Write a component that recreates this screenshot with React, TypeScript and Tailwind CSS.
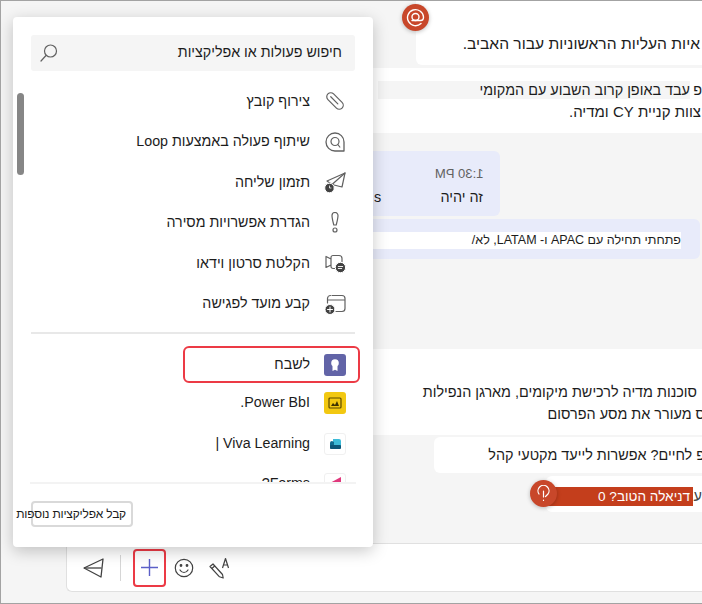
import type { ReactNode } from "react";

const font = "font-['Liberation_Sans',_'Noto_Sans',_sans-serif]";

function Svg({ children, size = 22 }: { children: ReactNode; size?: number }) {
  return (
    <svg width={size} height={size} viewBox="0 0 22 22" fill="none" stroke="#616161" strokeWidth="1.2" strokeLinecap="round" strokeLinejoin="round">
      {children}
    </svg>
  );
}

const ClipIcon = () => (
  <Svg>
    <g transform="rotate(-45 11 11)">
      <rect x="7" y="1" width="8" height="20" rx="4" />
      <path d="M11 5v10" />
    </g>
  </Svg>
);
const LoopIcon = () => (
  <Svg>
    <path d="M11 2a9 9 0 1 0 0 18h9v-9a9 9 0 0 0-9-9z" strokeWidth="1.300" />
    <circle cx="11" cy="10.500" r="4" />
    <path d="M13.800 13.500l2 2.500" />
  </Svg>
);
const ScheduleIcon = () => (
  <Svg>
    <path d="M21 2L3 10l5 3.500 10 2.500 3-14z" />
    <path d="M8 13.500L21 2" />
    <circle cx="5.500" cy="17" r="4.800" fill="#424242" stroke="white" strokeWidth="1" />
    <path d="M5.500 15v2H7" stroke="white" strokeWidth="0.800" />
  </Svg>
);
const AlertIcon = () => (
  <Svg>
    <path d="M8 3.500a3 3 0 0 1 6 0c0 3-1.300 7.500-1.800 9.500H9.800C9.300 11 8 6.500 8 3.500z" />
    <circle cx="11" cy="18" r="2" />
  </Svg>
);
const VideoIcon = () => (
  <Svg>
    <path d="M9 3.500h6a3 3 0 0 1 3 3v3M11 16.500H9a2 2 0 0 1-2-2v-9a2 2 0 0 1 2-2M7 7L2 4.500v11L7 13" />
    <circle cx="16.500" cy="15.500" r="5.200" fill="#424242" stroke="white" strokeWidth="1" />
    <path d="M14.300 14.500h4.400M14.300 16.500h3.400" stroke="white" strokeWidth="0.900" />
  </Svg>
);
const CalendarIcon = () => (
  <Svg>
    <path d="M8 2.500h10a3 3 0 0 1 3 3v10a3 3 0 0 1-3 3h-6M3.500 10V5.500a3 3 0 0 1 3-3M3.500 7h17.500" />
    <circle cx="6" cy="16.500" r="5" fill="#424242" stroke="white" strokeWidth="1" />
    <path d="M6 14v5M3.500 16.500h5" stroke="white" strokeWidth="1" />
  </Svg>
);

function Tile({ className, children }: { className: string; children: ReactNode }) {
  return <span className={`w-[22px] h-[22px] rounded-[3px] flex items-center justify-center shrink-0 ${className}`}>{children}</span>;
}

const PraiseTile = () => (
  <Tile className="bg-[#6264a7]">
    <svg width="12" height="14" viewBox="0 0 12 14">
      <circle cx="6" cy="5" r="3.800" fill="white" />
      <path d="M3.500 8v5l2.500-1.200L8.500 13V8z" fill="white" />
    </svg>
  </Tile>
);
const PowerTile = () => (
  <Tile className="bg-[#f2c811]">
    <svg width="14" height="12" viewBox="0 0 14 12">
      <rect x="1" y="1" width="12" height="10" rx="1" fill="none" stroke="#5c4a00" strokeWidth="1.200" />
      <path d="M3 9l2-3 2 2 2-4 2 5z" fill="#3d3200" />
    </svg>
  </Tile>
);
const VivaTile = () => (
  <Tile className="bg-white border border-[#f0f0f0]">
    <svg width="13" height="12" viewBox="0 0 13 12">
      <path d="M4 1h6a2 2 0 0 1 2 2v6H4z" fill="#3dbbd8" />
      <path d="M1 5a2 2 0 0 1 2-2l2 1v7H3a2 2 0 0 1-2-2z" fill="#0f6b8f" />
      <rect x="1" y="7" width="11" height="4" rx="1" fill="#0b5577" />
    </svg>
  </Tile>
);
const FormsTile = () => (
  <Tile className="bg-white border border-[#f0f0f0] items-start">
    <svg className="mt-[2px]" width="16" height="14" viewBox="0 0 16 14">
      <path d="M1 8L14 1v12H5z" fill="#e0387c" />
    </svg>
  </Tile>
);

const actions = [
  { label: "צירוף קובץ", icon: <ClipIcon /> },
  { label: "שיתוף פעולה באמצעות Loop", icon: <LoopIcon /> },
  { label: "תזמון שליחה", icon: <ScheduleIcon /> },
  { label: "הגדרת אפשרויות מסירה", icon: <AlertIcon /> },
  { label: "הקלטת סרטון וידאו", icon: <VideoIcon /> },
  { label: "קבע מועד לפגישה", icon: <CalendarIcon /> },
];

function Row({ icon, label, className = "h-[40.5px]" }: { icon: ReactNode; label: string; className?: string }) {
  return (
    <div className={`flex items-center gap-[14px] pr-[27px] text-[14.25px] text-[#1c1c1c] whitespace-nowrap ${className}`}>
      {icon}
      <span>{label}</span>
    </div>
  );
}

function Popup() {
  return (
    <div dir="rtl" className="absolute left-[12px] top-[16px] w-[360px] h-[530px] bg-white rounded-[4px] shadow-[0_4px_16px_rgba(0,0,0,0.22)] flex flex-col">
      <div className="absolute left-[4px] top-[76px] w-[7px] h-[82px] rounded-full bg-[#868686]" />
      <div className="mt-[18px] mx-[18px] h-[36px] shrink-0 bg-[#f5f5f5] rounded-[3px] flex items-center justify-between pr-[13px] pl-[8px] text-[14.25px] text-[#1c1c1c]">
        <span>חיפוש פעולות או אפליקציות</span>
        <svg width="20" height="20" viewBox="0 0 20 20" fill="none" stroke="#616161" strokeWidth="1.200" strokeLinecap="round">
          <circle cx="11.500" cy="8" r="6" />
          <path d="M7 12.500L2 18" />
        </svg>
      </div>

      <div className="h-[411px] shrink-0 overflow-hidden pt-[10px]">
        {actions.map((a) => (
          <Row key={a.label} icon={<span className="shrink-0 flex">{a.icon}</span>} label={a.label} />
        ))}
        <div className="h-[2px] mx-[18px] mt-[8px] bg-[#e8e8e8]" />
        <div className="relative mt-[12px] h-[37px] flex items-center">
          <Row icon={<PraiseTile />} label="לשבח" className="h-full w-full" />
          <div className="absolute left-[170px] right-[13px] inset-y-0 border-2 border-[#ec3a45] rounded-[6px]" />
        </div>
        <Row icon={<PowerTile />} label="Power BbI." className="h-[40px]" />
        <Row icon={<VivaTile />} label="Viva Learning |" className="h-[41px]" />
        <Row icon={<FormsTile />} label="Forms?" className="h-[40px]" />
      </div>
      <div className="h-[2px] mx-[17px] shrink-0 bg-[#f3f3f3]" />

      <div className="mt-[17px] mr-[240px] ml-[18px] h-[26px] border-2 border-[#d9d9d9] rounded-[4px] flex items-center pr-[5px] text-[12px] tracking-[-0.2px] text-[#1c1c1c] whitespace-nowrap">
        קבל אפליקציות נוספות
      </div>
    </div>
  );
}

function Composer() {
  return (
    <div className="ml-[65px] h-[49px] mb-[11px] shrink-0 bg-white border-t border-b border-l border-[#e0e0e0] rounded-bl-[6px] flex items-center pl-[16px]">
      <svg width="22" height="22" viewBox="0 0 22 22" fill="none" stroke="#424242" strokeWidth="1.300" strokeLinejoin="round">
        <path d="M1 11L20 2l-2 18z" />
        <path d="M1 11h17.500" />
      </svg>
      <div className="w-px h-[26px] bg-[#d6d6d6] ml-[15px] mr-[12px]" />
      <div className="w-[33px] h-[38px] border-2 border-[#ec3a45] rounded-[4px] flex items-center justify-center">
        <svg width="19" height="19" viewBox="0 0 19 19" stroke="#5b5fc7" strokeWidth="1.400">
          <path d="M9.500 1v17M1 9.500h17" />
        </svg>
      </div>
      <svg className="ml-[8px]" width="20" height="20" viewBox="0 0 20 20" fill="none" stroke="#424242" strokeWidth="1.200" strokeLinecap="round">
        <circle cx="10" cy="10" r="8.700" />
        <path d="M6 12c1 1.800 2.500 2.500 4 2.500s3-.7 4-2.500" />
        <circle cx="7" cy="7.500" r="0.800" fill="#424242" />
        <circle cx="13" cy="7.500" r="0.800" fill="#424242" />
      </svg>
      <svg className="ml-[15px]" width="22" height="22" viewBox="0 0 22 22" fill="none" stroke="#424242" strokeWidth="1.200" strokeLinejoin="round">
        <path d="M1 9.500l3-2.500 9.500 10.500.700 3.500-3.700-1.200z" />
        <path d="M2.800 11.500L6 8.800" />
        <path d="M13.500 11l3-9.500 3 9.500M14.500 8h4" />
      </svg>
    </div>
  );
}

export default function App() {
  return (
    <div className={`relative w-[702px] h-[604px] overflow-hidden bg-[#f5f5f5] border-t border-l border-b border-[#a3a3a3] flex flex-col ${font}`}>
      <div dir="rtl" className="flex-1 flex flex-col text-[14.4px] text-[#1c1c1c] whitespace-nowrap">
        <div className="relative ml-[415px] h-[64px] bg-white rounded-bl-[6px] pr-[2px] pt-[33px] leading-[20px] text-[15.6px]">
          איות העליות הראשוניות עבור האביב.
          <div className="absolute top-[3px] left-[-14px] w-[27px] h-[27px] rounded-full bg-[#c8472a] flex items-center justify-center shadow-[0_1px_4px_rgba(0,0,0,0.25)]">
            <svg width="19" height="19" viewBox="0 0 19 19" fill="none" stroke="white" strokeWidth="1.400" strokeLinecap="round">
              <path d="M15 15.500A8 8 0 1 1 17.500 9c0 2-1 3.500-2.800 3.500H6" />
              <circle cx="9.500" cy="9" r="3.500" />
            </svg>
          </div>
        </div>

        <div className="mt-[3px] ml-[372px] h-[65px] bg-white pt-[13px]">
          <div className="flex h-[18px] items-center leading-[18px]">
            <span className="w-[12px] shrink-0">פ</span>
            <span className="w-[312px] shrink-0 bg-[#f5f5f5]">עבד באופן קרוב השבוע עם המקומי</span>
          </div>
          <div className="mt-[3px] leading-[20px] pr-[1px] text-[15px]">צוות קניית CY ומדיה.</div>
        </div>

        <div className="mt-[18px] ml-[349px] mr-[202px] h-[65px] bg-[#e8ebfa] rounded-[6px] pt-[14px] pr-[17px] pl-[24px]">
          <div dir="ltr" className="text-right leading-[16px]">
            <span className="inline-block -scale-x-100 text-[13px] text-[#616161]">1:30 PM</span>
          </div>
          <div className="mt-[5px] flex justify-between leading-[20px]">
            <span>זה יהיה</span>
            <span>s</span>
          </div>
        </div>

        <div className="mt-[3px] ml-[349px] mr-[2px] h-[40px] bg-[#e8ebfa] rounded-[6px] pt-[13px] pr-[19px]">
          <div className="h-[17px] bg-white text-[12.5px] leading-[17px]">פתחתי תחילה עם APAC ו- LATAM, לא/</div>
        </div>

        <div className="mt-[90px] ml-[372px] h-[86px] bg-white pt-[32px] pr-[5px] leading-[22px]">
          <div>סוכנות מדיה לרכישת מיקומים, מארגן הנפילות</div>
          <div className="-mr-[8px]">ס מעורר את מסע הפרסום</div>
        </div>

        <div className="mt-[2px] ml-[433px] h-[36px] bg-white rounded-l-[6px] -mr-[3px] pt-[8px] leading-[20px]">
          פ לחיים? אפשרות לייעד מקטעי קהל
        </div>

        <div className="relative mt-[3px] ml-[545px] h-[36px] bg-white rounded-l-[6px] pt-[11px] leading-[19px]">
          <span className="text-[#424242]">ע</span>
          <div className="absolute -left-[5px] right-[9px] top-[11px] h-[19px] bg-[#c43e1c] text-white leading-[19px] pr-[3px] text-[13.6px]">דניאלה הטוב? 0</div>
          <div className="absolute left-[-16px] top-[4px] w-[27px] h-[27px] rounded-full bg-[#c8472a] flex items-center justify-center shadow-[0_1px_4px_rgba(0,0,0,0.25)]">
            <svg width="15" height="17" viewBox="0 0 15 17" fill="none" stroke="white" strokeWidth="1.200" strokeLinecap="round">
              <path d="M3 9a5.500 5.500 0 1 1 9 0l-2.500 2.500" />
              <path d="M7.500 6v6M7.500 15v.5" />
            </svg>
          </div>
        </div>
      </div>

      <Composer />
      <Popup />
    </div>
  );
}
